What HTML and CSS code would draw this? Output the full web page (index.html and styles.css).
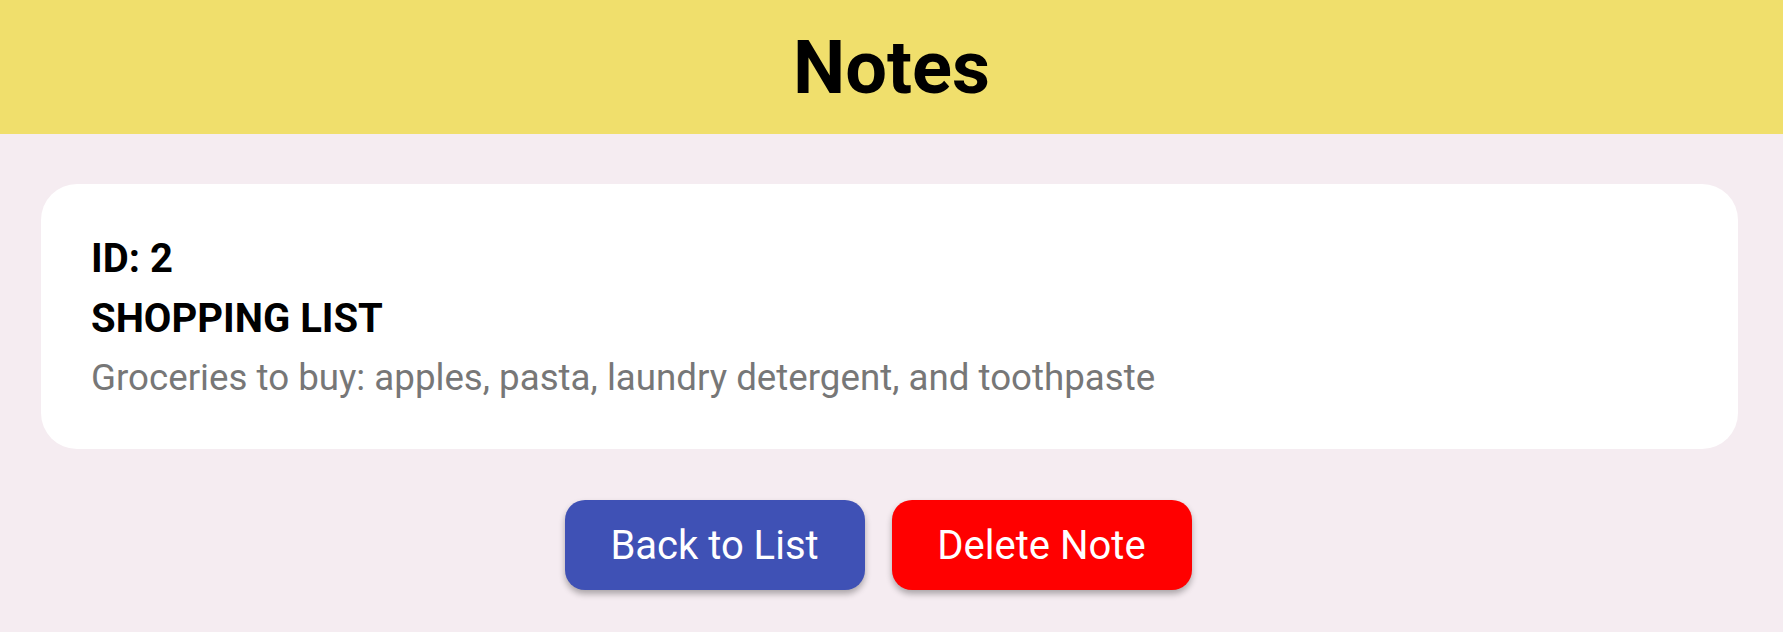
FILE: index.html
```html
<!DOCTYPE html>
<html lang="en">
<head>
<meta charset="utf-8">
<title>Notes</title>
<link rel="stylesheet" href="styles.css">
</head>
<body>
<header class="app-header">
  <h1 class="app-title">Notes</h1>
</header>
<main class="content">
  <section class="note-card">
    <div class="note-id">ID: 2</div>
    <div class="note-title">SHOPPING LIST</div>
    <div class="note-body">Groceries to buy: apples, pasta, laundry detergent, and toothpaste</div>
  </section>
  <div class="actions">
    <button class="btn btn-back">Back to List</button>
    <button class="btn btn-delete">Delete Note</button>
  </div>
</main>
</body>
</html>
```

FILE: styles.css
```css
* { box-sizing: border-box; }
html, body { margin: 0; padding: 0; }
body {
  background: #f5ecf1;
  font-family: Roboto, "Liberation Sans", Arial, sans-serif;
  color: #000;
  height: 632px;
  overflow: hidden;
}
.app-header {
  height: 134px;
  background: #f0df6c;
  display: flex;
  align-items: center;
  justify-content: center;
}
.app-title {
  margin: 0;
  font-size: 74px;
  font-weight: 700;
  line-height: normal;
}
.content {
  padding: 50px 45px 0 41px;
}
.note-card {
  background: #fff;
  border-radius: 36px;
  padding: 45px 50px 43px 50px;
}
.note-id, .note-title {
  font-size: 40px;
  font-weight: 700;
  line-height: 60px;
}
.note-body {
  font-size: 36.7px;
  line-height: 57px;
  color: #777;
}
.actions {
  display: flex;
  justify-content: center;
  padding-top: 51px;
  margin-right: -45px;
  margin-left: -41px;
}
.btn {
  width: 300px;
  height: 90px;
  border: none;
  border-radius: 20px;
  font-family: Roboto, "Liberation Sans", Arial, sans-serif;
  font-size: 40px;
  color: #fff;
  box-shadow: 0 4px 6px rgba(0, 0, 0, 0.3);
  margin-right: 27px;
  padding: 0;
}
.btn-back { background: #3f51b5; }
.btn-delete { background: #ff0000; }
```
